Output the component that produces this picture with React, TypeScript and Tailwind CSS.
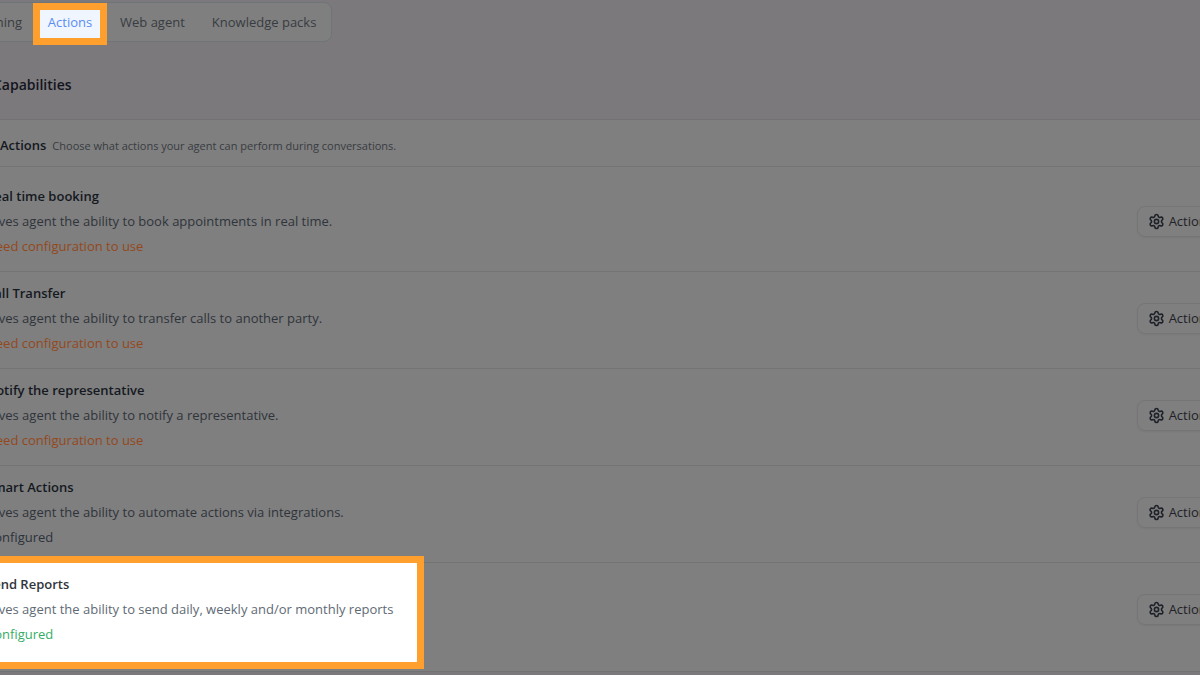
import { Settings } from 'lucide-react';

interface ActionItem {
  title: string;
  description: string;
  status: string;
  statusClass: string;
  active?: boolean;
}

const actions: ActionItem[] = [
  {
    title: 'Real time booking',
    description: 'Gives agent the ability to book appointments in real time.',
    status: 'Need configuration to use',
    statusClass: 'text-[#94481c]',
  },
  {
    title: 'Call Transfer',
    description: 'Gives agent the ability to transfer calls to another party.',
    status: 'Need configuration to use',
    statusClass: 'text-[#94481c]',
  },
  {
    title: 'Notify the representative',
    description: 'Gives agent the ability to notify a representative.',
    status: 'Need configuration to use',
    statusClass: 'text-[#94481c]',
  },
  {
    title: 'Smart Actions',
    description: 'Gives agent the ability to automate actions via integrations.',
    status: 'Configured',
    statusClass: 'text-[#2c323b]',
  },
  {
    title: 'Send Reports',
    description: 'Gives agent the ability to send daily, weekly and/or monthly reports',
    status: 'Configured',
    statusClass: 'text-[#35ad67]',
    active: true,
  },
];

function Tabs() {
  return (
    <nav className="flex w-fit -ml-10 mt-[2px] h-10 items-center rounded-lg border border-[#6f7479] bg-[#7f7f7f] pt-[2px] pr-[15px] text-[#383c41]">
      <button type="button" className="w-[72px] text-right pr-[11px]">Training</button>
      <button type="button" className="relative w-[74px] h-[30px] bg-[#eff6ff] text-[#5b8cf5]">
        <span className="absolute inset-x-0 -top-[5px] -bottom-[7px] border-[7px] border-[#ff9f2e]" />
        Actions
      </button>
      <button type="button" className="ml-[13px]">Web agent</button>
      <button type="button" className="ml-[27px]">Knowledge packs</button>
    </nav>
  );
}

function ActionRow({ item }: { item: ActionItem }) {
  return (
    <li className="flex items-center justify-between border-b border-[#747475] pt-[9px] pb-3 last:border-0">
      <div className="relative leading-[25px]">
        {item.active && (
          <span className="absolute -top-4 -bottom-[22px] -left-5 w-[458px] border-[7px] border-[#ff9f2e] bg-white" />
        )}
        <h3 className={`relative font-semibold ${item.active ? 'text-[#30353b]' : 'text-[#15191f]'}`}>{item.title}</h3>
        <p className={`relative ${item.active ? 'text-[#606a75]' : 'text-[#2f343b]'}`}>{item.description}</p>
        <p className={`relative ${item.statusClass}`}>{item.status}</p>
      </div>
      <button type="button" className="flex h-[31px] items-center gap-1 rounded-lg border border-[#757576] px-[10px] text-[#1e2228] shadow-xs">
        <Settings size={17} strokeWidth={2.25} />
        Actions
      </button>
    </li>
  );
}

export default function App() {
  return (
    <main className="min-h-screen overflow-hidden bg-[#7c797c] font-['Open_Sans','Noto_Sans',sans-serif] text-[13px]">
      <Tabs />
      <h1 className="-ml-[7px] mt-[31px] text-[14px] leading-6 font-semibold text-[#12151c]">Capabilities</h1>
      <section className="-mx-6 mt-[22px] border-y border-[#727274] bg-[#7f7f7f]">
        <header className="flex h-[47px] items-center gap-[6px] border-b border-[#747475] pl-6 pt-[6px]">
          <h2 className="font-semibold text-[#15191f]">Actions</h2>
          <p className="text-[11px] text-[#383c41]">Choose what actions your agent can perform during conversations.</p>
        </header>
        <ul className="pt-2 pb-3 pl-[10px]">
          {actions.map((item) => (
            <ActionRow key={item.title} item={item} />
          ))}
        </ul>
      </section>
    </main>
  );
}
